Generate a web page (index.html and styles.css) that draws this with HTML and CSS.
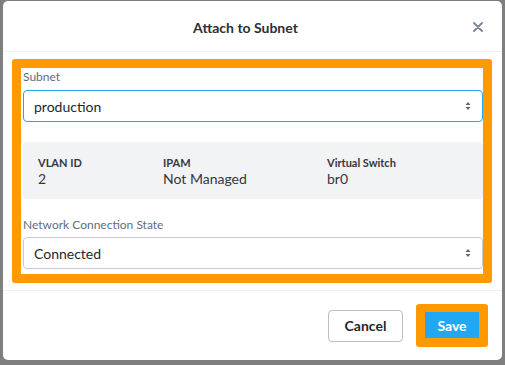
FILE: index.html
```html
<!DOCTYPE html>
<html lang="en">
<head>
    <meta charset="UTF-8">
    <meta name="viewport" content="width=device-width, initial-scale=1.0">
    <title>Attach to Subnet</title>
    <link rel="stylesheet" href="styles.css">
</head>
<body>
    <div class="modal">
        <div class="modal-header">
            <span></span>
            <h2 class="modal-title">Attach to Subnet</h2>
            <button class="close-button" aria-label="Close">
                <svg width="10" height="10" viewBox="0 0 10 10">
                    <path d="M1 1 L9 9 M9 1 L1 9" stroke="#7b8594" stroke-width="1.8" stroke-linecap="round"/>
                </svg>
            </button>
        </div>

        <div class="modal-body">
            <div class="highlight">
                <label class="field-label">Subnet</label>
                <div class="select focused">
                    <span>production</span>
                    <svg class="select-arrows" width="6" height="10" viewBox="0 0 6 10">
                        <path d="M3 1 L5.5 4 L0.5 4 Z M3 9 L5.5 6 L0.5 6 Z" fill="#5d6675"/>
                    </svg>
                </div>

                <div class="info-panel">
                    <div class="info-item">
                        <div class="info-label">VLAN ID</div>
                        <div class="info-value">2</div>
                    </div>
                    <div class="info-item">
                        <div class="info-label">IPAM</div>
                        <div class="info-value">Not Managed</div>
                    </div>
                    <div class="info-item">
                        <div class="info-label">Virtual Switch</div>
                        <div class="info-value">br0</div>
                    </div>
                </div>

                <label class="field-label second">Network Connection State</label>
                <div class="select">
                    <span>Connected</span>
                    <svg class="select-arrows" width="6" height="10" viewBox="0 0 6 10">
                        <path d="M3 1 L5.5 4 L0.5 4 Z M3 9 L5.5 6 L0.5 6 Z" fill="#5d6675"/>
                    </svg>
                </div>
            </div>
        </div>

        <div class="modal-footer">
            <button class="btn btn-cancel">Cancel</button>
            <div class="save-highlight">
                <button class="btn btn-save">Save</button>
            </div>
        </div>
    </div>
</body>
</html>
```

FILE: styles.css
```css
body {
    margin: 0;
    padding: 0;
    background: #7f7f7f;
    font-family: Lato, "Open Sans", Arial, sans-serif;
    color: #22272e;
    height: 365px;
    overflow: hidden;
}
.modal {
    margin: 1px 3px 0 3px;
    width: 499px;
    height: 359px;
    background: #fff;
    border-radius: 5px;
    display: flex;
    flex-direction: column;
}
.modal-header {
    height: 50px;
    border-bottom: 1px solid #eef0f2;
    display: grid;
    grid-template-columns: 1fr auto 1fr;
    align-items: center;
}
.modal-title {
    margin: 0 14px 0 0;
    font-size: 14px;
    font-weight: bold;
    color: #2b2e35;
    padding-top: 2px;
}
.close-button {
    justify-self: end;
    margin-right: 18px;
    border: none;
    background: none;
    padding: 0;
    width: 12px;
    height: 12px;
    display: flex;
    align-items: center;
    justify-content: center;
    margin-top: 2px;
}
.modal-body {
    padding: 7px 10px 7px 9px;
    border-bottom: 1px solid #eef0f2;
}
.highlight {
    border: 9px solid #ff9900;
    border-radius: 3px;
    padding: 1px 0 5px 2px;
    width: 460px;
}
.field-label {
    display: block;
    font-size: 12px;
    line-height: 16px;
    color: #5f6d80;
    margin-bottom: 5px;
}
.field-label.second {
    margin-top: 18px;
    margin-bottom: 4px;
}
.select {
    height: 30px;
    border: 1px solid #c6cbd3;
    border-radius: 4px;
    display: flex;
    align-items: center;
    justify-content: space-between;
    padding: 0 11px 0 10px;
    font-size: 14px;
    color: #22272e;
}
.select.focused {
    border-color: #2aa3ef;
}
.info-panel {
    margin-top: 20px;
    background: #f2f3f5;
    border-radius: 4px;
    padding: 14px 15px 11px 15px;
    display: grid;
    grid-template-columns: 125px 164px 1fr;
}
.info-label {
    font-size: 11px;
    line-height: 14px;
    font-weight: bold;
    color: #33373e;
}
.info-value {
    font-size: 14px;
    line-height: 18px;
    color: #33373e;
}
.modal-footer {
    flex: 1;
    display: flex;
    justify-content: flex-end;
    align-items: center;
    gap: 13px;
    padding-right: 14px;
}
.btn {
    font-family: Lato, "Open Sans", Arial, sans-serif;
    font-size: 14px;
    font-weight: bold;
    border-radius: 4px;
    cursor: pointer;
}
.btn-cancel {
    width: 75px;
    height: 32px;
    background: #fff;
    border: 1px solid #b8bfc9;
    color: #22272e;
}
.save-highlight {
    border: 9px solid #ff9900;
    border-top-width: 8px;
    border-radius: 3px;
    display: flex;
}
.btn-save {
    width: 54px;
    height: 26px;
    background: #22a7f2;
    border: none;
    border-radius: 0;
    color: #fff;
}
```
